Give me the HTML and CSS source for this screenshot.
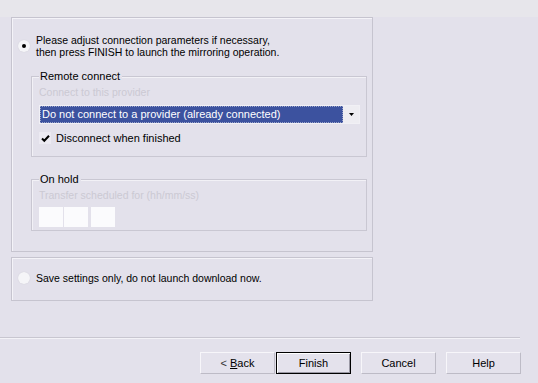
FILE: index.html
```html
<!DOCTYPE html>
<html lang="en">
<head>
  <meta charset="UTF-8" />
  <title>Mirroring wizard</title>
  <link rel="stylesheet" href="styles.css">
</head>
<body>

  <div class="wizard">
    <div class="top-strip"></div>

    <div class="panel main-panel">
      <div class="option">
        <span class="radio checked"></span>
        <div class="option-text">
          Please adjust connection parameters if necessary,<br>
          then press FINISH to launch the mirroring operation.
        </div>
      </div>

      <div class="group remote">
        <div class="legend">Remote connect</div>
        <div class="disabled-label">Connect to this provider</div>
        <div class="select">
          <div class="select-value">Do not connect to a provider (already connected)</div>
          <div class="select-arrow">
            <svg width="5" height="3" viewBox="0 0 5 3"><path d="M0 0h5L2.5 3z" fill="#000"/></svg>
          </div>
        </div>
        <div class="check-row">
          <span class="checkbox">
            <svg width="9" height="9" viewBox="0 0 9 9"><path d="M1 4.5l2.3 2.3L8 1.8" fill="none" stroke="#000" stroke-width="2"/></svg>
          </span>
          <span>Disconnect when finished</span>
        </div>
      </div>

      <div class="group hold">
        <div class="legend">On hold</div>
        <div class="disabled-label">Transfer scheduled for (hh/mm/ss)</div>
        <div class="time-boxes">
          <span class="time-box"></span>
          <span class="time-box"></span>
          <span class="time-box"></span>
        </div>
      </div>
    </div>

    <div class="panel save-panel">
      <div class="option">
        <span class="radio"></span>
        <div class="option-text">Save settings only, do not launch download now.</div>
      </div>
    </div>

    <div class="separator"></div>

    <div class="buttons">
      <button class="btn"><span class="lt">&lt;</span> <u>B</u>ack</button>
      <button class="btn default">Finish</button>
      <button class="btn gap">Cancel</button>
      <button class="btn gap">Help</button>
    </div>
  </div>

</body>
</html>
```

FILE: styles.css
```css
* {
  box-sizing: border-box;
}
body {
  margin: 0;
  font-family: 'Liberation Sans', Arial, sans-serif;
  font-size: 10.5px;
  color: #000;
  background: #e3e1eb;
}
.wizard {
  width: 538px;
  height: 383px;
  overflow: hidden;
}
.top-strip {
  height: 17px;
  background: #e7e6eb;
}
.panel {
  margin-left: 11px;
  width: 362px;
  border: 1px solid #c6c4cf;
  box-shadow: inset 1px 1px 0 #f4f3f8;
}
.main-panel {
  height: 235px;
  padding: 16px 5px 0 6px;
}
.save-panel {
  margin-top: 5px;
  height: 44px;
  padding: 14px 5px 0 6px;
}
.option {
  display: flex;
  align-items: flex-start;
}
.option-text {
  margin-left: 6px;
  line-height: 12px;
}
.radio {
  width: 12px;
  height: 12px;
  margin-top: 6px;
  border-radius: 50%;
  background: #f5f5f8;
  box-shadow: 0 0 1px #c4c2cc;
  position: relative;
  flex: none;
}
.save-panel .radio {
  margin-top: 0;
}
.radio.checked::after {
  content: '';
  position: absolute;
  left: 4px;
  top: 4px;
  width: 4px;
  height: 4px;
  border-radius: 50%;
  background: #000;
}
.group {
  margin-left: 13px;
  width: 336px;
  border: 1px solid #c9c7d2;
  box-shadow: inset 1px 1px 0 #f2f1f6;
  padding: 4px 0 0 7px;
}
.remote {
  margin-top: 18px;
  height: 81px;
}
.hold {
  margin-top: 22px;
  height: 52px;
}
.legend {
  display: table;
  margin-top: -12px;
  padding: 0 2px 0 1px;
  background: #e3e1eb;
  line-height: 14px;
  font-size: 11px;
}
.disabled-label {
  color: #cbc9d3;
  line-height: 12px;
  margin-top: 3px;
}
.select {
  margin-top: 7px;
  width: 321px;
  height: 19px;
  background: #f1f0f5;
  display: flex;
  padding: 1px;
}
.select-value {
  flex: 1;
  background: #3c529f;
  color: #fff;
  outline: 1px dotted #9aa3c8;
  outline-offset: -1px;
  line-height: 16px;
  padding-left: 2px;
  font-size: 11px;
}
.select-arrow {
  width: 16px;
  display: flex;
  align-items: center;
  justify-content: center;
  background: #eeedf2;
}
.check-row {
  display: flex;
  align-items: center;
  margin-top: 8px;
  font-size: 11px;
}
.checkbox {
  width: 12px;
  height: 12px;
  background: #eceaf2;
  margin-right: 5px;
  display: flex;
  align-items: center;
  justify-content: center;
}
.time-boxes {
  display: flex;
  margin-top: 6px;
}
.time-box {
  width: 24px;
  height: 20px;
  background: #fbfbfd;
  margin-right: 1px;
}
.time-box:last-child {
  margin-left: 2px;
}
.separator {
  margin-top: 36px;
  width: 520px;
  border-top: 1px solid #c8c6d0;
  border-bottom: 1px solid #f3f2f7;
}
.buttons {
  display: flex;
  margin: 13px 0 0 200px;
}
.btn {
  width: 75px;
  height: 22px;
  font-family: inherit;
  font-size: 11px;
  background: #e4e2ec;
  border: 1px solid;
  border-color: #f7f6fa #bdbbc6 #bdbbc6 #f7f6fa;
  padding: 0;
  margin-right: 1px;
}
.btn.default {
  border: 1px solid #000;
  box-shadow: inset 1px 1px 0 #fff, inset -1px -1px 0 #9a98a4;
}
.btn.gap {
  margin-left: 9px;
}
.btn .lt {
  color: #333;
}
```
